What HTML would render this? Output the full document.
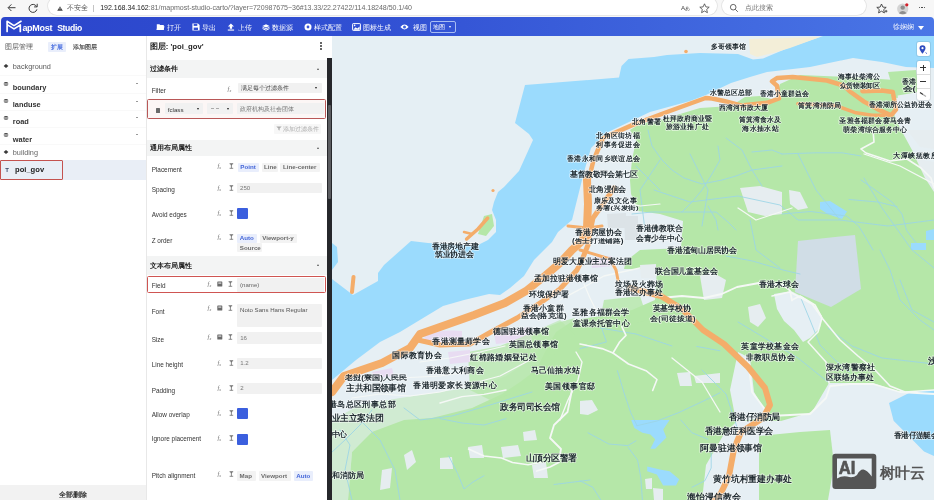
<!DOCTYPE html>
<html><head><meta charset="utf-8">
<style>
*{margin:0;padding:0;box-sizing:border-box}
html,body{width:934px;height:500px;overflow:hidden;background:#f7f7f7;font-family:"Liberation Sans",sans-serif;position:relative}
#root{position:absolute;left:0;top:0;width:934px;height:500px;overflow:hidden;will-change:transform}
.abs{position:absolute;white-space:nowrap}
.t{position:absolute;white-space:nowrap;line-height:10px}
.pill{position:absolute;background:#fff;border-radius:9px;box-shadow:0 0 0 0.8px #e2e2e2}
#hdr{position:absolute;left:1px;top:16.8px;width:933px;height:19.6px;background:linear-gradient(90deg,#2b45cb 0%,#3150d3 40%,#4a76e6 100%);border-radius:4px 4px 0 0}
.mi{position:absolute;top:22.5px;color:#fff;font-size:7px;line-height:10px}
#map{position:absolute;left:332px;top:36px;width:602px;height:464px;background:#e5eff4;overflow:hidden}
</style></head><body><div id="root">
<div class="abs" style="left:0px;top:0px;width:934.00px;height:17.00px;background:#f7f7f7;"></div>
<svg class="abs" style="left:6px;top:2px" width="12" height="12" viewBox="0 0 12 12"><path d="M9.5 5.7H2.4M5.4 2.4L2.1 5.7l3.3 3.3" stroke="#333" stroke-width="0.95" fill="none"/></svg>
<svg class="abs" style="left:27px;top:2px" width="12" height="12" viewBox="0 0 12 12"><path d="M9.6 4.6A4 4 0 1 0 9.9 7.4" stroke="#333" stroke-width="0.95" fill="none"/><path d="M10.2 1.8v3.1H7.1" stroke="#333" stroke-width="0.95" fill="none"/></svg>
<div class="pill" style="left:47.6px;top:-3px;width:669px;height:18.4px"></div>
<svg class="abs" style="left:57px;top:6px" width="6" height="5" viewBox="0 0 6 5"><path d="M3 0.2L5.8 4.8H0.2Z" fill="#444"/><rect x="2.7" y="1.6" width="0.6" height="1.8" fill="#fff"/></svg>
<div class="t" style="left:67.3px;top:3.00px;font-size:6.8px;color:#555;">不安全</div>
<div class="abs" style="left:93.4px;top:4.5px;width:0.80px;height:7.10px;background:#c4c4c4;"></div>
<div class="t" style="left:100.2px;top:3.30px;font-size:7.05px;color:#6a6a6a;letter-spacing:-0.03px"><span style="color:#222">192.168.34.162</span>:81/mapmost-studio-carto/?layer=720987675~36#13.33/22.27422/114.18248/50.1/40</div>
<div class="t" style="left:681px;top:3.00px;font-size:6.2px;color:#444;">A<span style="font-size:5px">あ</span></div>
<svg class="abs" style="left:699px;top:3px" width="11" height="11" viewBox="0 0 11 11"><path d="M5.5 0.8L6.9 3.9L10.2 4.2L7.7 6.4L8.4 9.7L5.5 8L2.6 9.7L3.3 6.4L0.8 4.2L4.1 3.9Z" stroke="#444" stroke-width="0.8" fill="none" stroke-linejoin="round"/></svg>
<div class="pill" style="left:722px;top:-3px;width:144px;height:18.4px"></div>
<svg class="abs" style="left:729px;top:3px" width="10" height="10" viewBox="0 0 10 10"><circle cx="4.2" cy="4.2" r="2.8" stroke="#555" stroke-width="0.9" fill="none"/><path d="M6.3 6.3L8.8 8.8" stroke="#555" stroke-width="0.9"/></svg>
<div class="t" style="left:744.6px;top:3.00px;font-size:6.8px;color:#777;">点此搜索</div>
<svg class="abs" style="left:876px;top:2.5px" width="12" height="12" viewBox="0 0 12 12"><path d="M5.5 1L6.9 4.1L10.2 4.4L7.7 6.6L8.4 9.9L5.5 8.2L2.6 9.9L3.3 6.6L0.8 4.4L4.1 4.1Z" stroke="#333" stroke-width="0.85" fill="none" stroke-linejoin="round"/><path d="M8.8 8.2h2.6M10.1 6.9v2.6" stroke="#333" stroke-width="0.8"/></svg>
<svg class="abs" style="left:896px;top:1.5px" width="14" height="14" viewBox="0 0 14 14"><circle cx="6.7" cy="7" r="5.6" fill="#d4d4d4"/><circle cx="6.7" cy="5.6" r="2.2" fill="#8e8e8e"/><path d="M2.8 11.2Q6.7 6.8 10.6 11.2Q6.7 13.5 2.8 11.2Z" fill="#8e8e8e"/><circle cx="10.8" cy="2.8" r="1.6" fill="#d21f2a"/></svg>
<div class="abs" style="left:918.5px;top:7px;width:1.30px;height:1.30px;background:#333;border-radius:1px"></div>
<div class="abs" style="left:921.3px;top:7px;width:1.30px;height:1.30px;background:#333;border-radius:1px"></div>
<div class="abs" style="left:924.1px;top:7px;width:1.30px;height:1.30px;background:#333;border-radius:1px"></div>
<div id="hdr"></div>
<svg class="abs" style="left:5px;top:19px" width="18" height="14" viewBox="5 19 18 14"><path d="M7.1,31.4 V21.3 L14,25.6 L21,21.3 M7.1,24.6 L14,28.9 L20.3,25 V31.4" stroke="#fff" stroke-width="1.7" fill="none" stroke-linejoin="round" stroke-linecap="round"/></svg>
<div class="t" style="left:22.4px;top:23.28px;font-size:9.0px;color:#fff;font-weight:bold;letter-spacing:-0.3px">apMost</div>
<div class="t" style="left:57.2px;top:23.42px;font-size:8.6px;color:#fff;font-weight:bold;letter-spacing:-0.35px">Studio</div>
<div class="t" style="left:167.3px;top:22.50px;font-size:6.9px;color:#fff;">打开</div>
<div class="t" style="left:202.3px;top:22.50px;font-size:6.9px;color:#fff;">导出</div>
<div class="t" style="left:237.6px;top:22.50px;font-size:6.9px;color:#fff;">上传</div>
<div class="t" style="left:272.4px;top:22.50px;font-size:6.9px;color:#fff;">数据源</div>
<div class="t" style="left:314px;top:22.50px;font-size:6.9px;color:#fff;">样式配置</div>
<div class="t" style="left:362.8px;top:22.50px;font-size:6.9px;color:#fff;">图标生成</div>
<div class="t" style="left:412.5px;top:22.50px;font-size:6.9px;color:#fff;">视图</div>
<svg class="abs" style="left:156px;top:23px" width="9" height="8" viewBox="0 0 9 8"><path d="M0.8 1.2h2.6l0.8 0.9h3.6v4.9H0.8z" fill="#fff"/><path d="M1.5 3.3h7l-1 3.7h-7z" fill="#fff"/></svg>
<svg class="abs" style="left:191.5px;top:23.4px" width="8" height="8" viewBox="0 0 8 8"><path d="M0.4 0.4h5.6l1.6 1.6v5.6H0.4z" fill="#fff"/><rect x="1.7" y="0.9" width="3.6" height="2" fill="#3552d4"/><rect x="1.7" y="4.6" width="4.3" height="2.4" fill="#3552d4"/></svg>
<svg class="abs" style="left:227px;top:23.2px" width="8" height="8" viewBox="0 0 8 8"><path d="M3.9 0.4L0.9 3.6h1.9v2.2h2.3V3.6h1.9z" fill="#fff"/><rect x="0.8" y="6.5" width="6.3" height="1.1" fill="#fff"/></svg>
<svg class="abs" style="left:261.5px;top:23.6px" width="8" height="7" viewBox="0 0 8 7"><path d="M4 0.3L7.6 1.9L4 3.5L0.4 1.9z" fill="#fff"/><path d="M0.5 3.2L4 4.8L7.5 3.2M0.5 4.6L4 6.2L7.5 4.6" stroke="#fff" stroke-width="0.9" fill="none"/></svg>
<svg class="abs" style="left:303.5px;top:23px" width="8" height="8" viewBox="0 0 8 8"><circle cx="4" cy="4" r="3.5" fill="#fff"/><circle cx="4" cy="4" r="1.4" fill="#3854d6"/></svg>
<svg class="abs" style="left:352px;top:23px" width="9" height="8" viewBox="0 0 9 8"><rect x="0.6" y="0.6" width="7.8" height="6.8" stroke="#fff" stroke-width="1" fill="none" rx="0.6"/><path d="M1.4 6.6L3.6 4.3L5.3 5.6L7.6 3.4V6.8H1.4z" fill="#fff"/><circle cx="2.6" cy="2.4" r="0.8" fill="#fff"/></svg>
<svg class="abs" style="left:400px;top:23.2px" width="9" height="8" viewBox="0 0 9 8"><path d="M0.4 4Q4.5 -0.8 8.6 4Q4.5 8.8 0.4 4z" fill="#fff"/><circle cx="4.5" cy="4" r="1.5" fill="#3f62dc"/></svg>
<div class="abs" style="left:430.2px;top:21.4px;width:25.8px;height:11.2px;border:0.9px solid #a8bdf2;border-radius:2px"></div>
<div class="t" style="left:433.4px;top:22.00px;font-size:6px;color:#fff;">地图</div>
<div class="abs" style="left:449.2px;top:26.2px;width:0;height:0;border-left:1.5px solid transparent;border-right:1.5px solid transparent;border-top:2px solid #fff"></div>
<div class="t" style="left:893px;top:22.40px;font-size:6.9px;color:#fff;opacity:0.92">徐娴娴</div>
<div class="abs" style="left:917.6px;top:26px;width:0;height:0;border-left:3px solid transparent;border-right:3px solid transparent;border-top:4px solid #fff"></div>
<div class="abs" style="left:0px;top:36px;width:146.00px;height:464.00px;background:#fff;"></div>
<div class="abs" style="left:146px;top:36px;width:0.80px;height:464.00px;background:#e8e8e8;"></div>
<div class="t" style="left:4.8px;top:42.20px;font-size:7.0px;color:#555;">图层管理</div>
<div class="abs" style="left:48px;top:42.2px;width:18.00px;height:10.00px;background:#e9eefb;border-radius:1px"></div>
<div class="t" style="left:51px;top:42.20px;font-size:6.1px;color:#4a6fe0;font-weight:bold;">扩展</div>
<div class="t" style="left:72.6px;top:42.20px;font-size:6.1px;color:#3a3a3a;-webkit-text-stroke:0.15px #3a3a3a">添加图层</div>
<div class="abs" style="left:0px;top:75px;width:145.50px;height:0.70px;background:#f9f9f9;"></div>
<div class="abs" style="left:0px;top:92.6px;width:145.50px;height:0.70px;background:#f9f9f9;"></div>
<div class="abs" style="left:0px;top:110px;width:145.50px;height:0.70px;background:#f9f9f9;"></div>
<div class="abs" style="left:0px;top:126.5px;width:145.50px;height:0.70px;background:#f9f9f9;"></div>
<div class="abs" style="left:0px;top:143.5px;width:145.50px;height:0.70px;background:#f9f9f9;"></div>
<svg class="abs" style="left:2.5999999999999996px;top:63px" width="6" height="6" viewBox="0 0 6 6"><path d="M0.6 3L3 1L5.4 3L3 5Z" fill="#3a3a3a"/></svg>
<div class="t" style="left:12.8px;top:62.07px;font-size:7.3px;color:#5a5a5a;">background</div>
<svg class="abs" style="left:2.5999999999999996px;top:80.6px" width="6" height="6" viewBox="0 0 6 6"><path d="M0.6 2.6Q0.6 1 3 1Q5.4 1 5.4 2.6Z" fill="#3a3a3a"/><path d="M0.6 3.2H5.4Q5.4 5 3 5Q0.6 5 0.6 3.2Z" fill="#777"/></svg>
<div class="t" style="left:12.8px;top:82.74px;font-size:7.4px;color:#333;font-weight:bold;">boundary</div>
<div class="abs" style="left:135.5px;top:83.19999999999999px;width:2.00px;height:0.90px;background:#999;"></div>
<svg class="abs" style="left:2.5999999999999996px;top:97.9px" width="6" height="6" viewBox="0 0 6 6"><path d="M0.6 2.6Q0.6 1 3 1Q5.4 1 5.4 2.6Z" fill="#3a3a3a"/><path d="M0.6 3.2H5.4Q5.4 5 3 5Q0.6 5 0.6 3.2Z" fill="#777"/></svg>
<div class="t" style="left:12.8px;top:100.04px;font-size:7.4px;color:#333;font-weight:bold;">landuse</div>
<div class="abs" style="left:135.5px;top:100.5px;width:2.00px;height:0.90px;background:#999;"></div>
<svg class="abs" style="left:2.5999999999999996px;top:114.8px" width="6" height="6" viewBox="0 0 6 6"><path d="M0.6 2.6Q0.6 1 3 1Q5.4 1 5.4 2.6Z" fill="#3a3a3a"/><path d="M0.6 3.2H5.4Q5.4 5 3 5Q0.6 5 0.6 3.2Z" fill="#777"/></svg>
<div class="t" style="left:12.8px;top:117.44px;font-size:7.4px;color:#333;font-weight:bold;">road</div>
<div class="abs" style="left:135.5px;top:117.39999999999999px;width:2.00px;height:0.90px;background:#999;"></div>
<svg class="abs" style="left:2.5999999999999996px;top:131.7px" width="6" height="6" viewBox="0 0 6 6"><path d="M0.6 2.6Q0.6 1 3 1Q5.4 1 5.4 2.6Z" fill="#3a3a3a"/><path d="M0.6 3.2H5.4Q5.4 5 3 5Q0.6 5 0.6 3.2Z" fill="#777"/></svg>
<div class="t" style="left:12.8px;top:134.64px;font-size:7.4px;color:#333;font-weight:bold;">water</div>
<div class="abs" style="left:135.5px;top:134.29999999999998px;width:2.00px;height:0.90px;background:#999;"></div>
<svg class="abs" style="left:2.5999999999999996px;top:149.4px" width="6" height="6" viewBox="0 0 6 6"><path d="M0.6 3L3 1L5.4 3L3 5Z" fill="#3a3a3a"/></svg>
<div class="t" style="left:12.8px;top:147.67px;font-size:7.3px;color:#666;">building</div>
<div class="abs" style="left:0px;top:160.2px;width:145.50px;height:19.50px;background:#e9eef6;"></div>
<div class="abs" style="left:0;top:160.2px;width:63px;height:19.5px;border:1.7px solid #c4524f;border-radius:1px"></div>
<div class="t" style="left:5.2px;top:165.32px;font-size:6px;color:#3a4a6a;font-weight:bold;">T</div>
<div class="t" style="left:15px;top:164.57px;font-size:7.6px;color:#222;font-weight:bold;">poi_gov</div>
<div class="abs" style="left:0px;top:485px;width:145.50px;height:15.00px;background:#f2f2f2;"></div>
<div class="t" style="left:59px;top:489.90px;font-size:7px;color:#333;font-weight:bold;">全部删除</div>
<div class="abs" style="left:146.8px;top:36px;width:185.20px;height:464.00px;background:#fff;"></div>
<div class="t" style="left:149.8px;top:41.70px;font-size:7.7px;color:#222;font-weight:bold;">图层: 'poi_gov'</div>
<div class="abs" style="left:320px;top:42.4px;width:1.60px;height:1.60px;background:#333;border-radius:1px"></div>
<div class="abs" style="left:320px;top:45.4px;width:1.60px;height:1.60px;background:#333;border-radius:1px"></div>
<div class="abs" style="left:320px;top:48.4px;width:1.60px;height:1.60px;background:#333;border-radius:1px"></div>
<div class="abs" style="left:146.8px;top:60px;width:180.20px;height:17.80px;background:#f3f4f4;"></div>
<div class="t" style="left:149.8px;top:63.90px;font-size:6.8px;color:#222;font-weight:bold;">过滤条件</div>
<div class="abs" style="left:316.6px;top:67.6px;width:0;height:0;border-left:1.8px solid transparent;border-right:1.8px solid transparent;border-bottom:2.2px solid #555"></div>
<div class="abs" style="left:146.8px;top:140.2px;width:180.20px;height:15.40px;background:#f3f4f4;"></div>
<div class="t" style="left:149.8px;top:142.90px;font-size:6.8px;color:#222;font-weight:bold;">通用布局属性</div>
<div class="abs" style="left:316.6px;top:146.6px;width:0;height:0;border-left:1.8px solid transparent;border-right:1.8px solid transparent;border-bottom:2.2px solid #555"></div>
<div class="abs" style="left:146.8px;top:256px;width:180.20px;height:19.20px;background:#f3f4f4;"></div>
<div class="t" style="left:149.8px;top:260.60px;font-size:6.8px;color:#222;font-weight:bold;">文本布局属性</div>
<div class="abs" style="left:316.6px;top:264.3px;width:0;height:0;border-left:1.8px solid transparent;border-right:1.8px solid transparent;border-bottom:2.2px solid #555"></div>
<div class="t" style="left:151.7px;top:85.58px;font-size:6.4px;color:#333;">Filter</div>
<div class="t" style="left:227.6px;top:83.5px;font-size:6.6px;color:#777;font-style:italic;font-family:'Liberation Serif',serif">f<span style="font-size:4px;vertical-align:-0.5px">x</span></div>
<div class="abs" style="left:237.8px;top:83.2px;width:84.60px;height:10.20px;background:#f1f1f1;border-radius:1px"></div>
<div class="t" style="left:240.8px;top:83.30px;font-size:5.9px;color:#444;">满足每个过滤条件</div>
<div class="abs" style="left:315.4px;top:87.3px;width:0;height:0;border-left:1.6px solid transparent;border-right:1.6px solid transparent;border-top:2.2px solid #222"></div>
<div class="abs" style="left:146.7px;top:99.1px;width:179.5px;height:19.5px;border:1.8px solid #b95757;background:#fcf6f5;border-radius:1.5px"></div>
<div class="abs" style="left:156.2px;top:107.8px;width:3.40px;height:4.80px;background:#6a6a6a;border-radius:0.5px"></div>
<div class="abs" style="left:164.7px;top:103.4px;width:38.30px;height:11.00px;background:#f1f1f1;border-radius:1px"></div>
<div class="t" style="left:167.7px;top:104.85px;font-size:6.2px;color:#333;">fclass</div>
<div class="abs" style="left:197.20000000000002px;top:107.7px;width:0;height:0;border-left:1.6px solid transparent;border-right:1.6px solid transparent;border-top:2.2px solid #222"></div>
<div class="abs" style="left:207.2px;top:103.4px;width:25.80px;height:11.00px;background:#f1f1f1;border-radius:1px"></div>
<div class="abs" style="left:211px;top:108px;width:3.00px;height:1.40px;background:#aaa;"></div>
<div class="abs" style="left:215.6px;top:108px;width:3.00px;height:1.40px;background:#aaa;"></div>
<div class="abs" style="left:227.20000000000002px;top:107.7px;width:0;height:0;border-left:1.6px solid transparent;border-right:1.6px solid transparent;border-top:2.2px solid #222"></div>
<div class="abs" style="left:237.2px;top:103.4px;width:86.40px;height:11.00px;background:#f1f1f1;border-radius:1px"></div>
<div class="t" style="left:240.2px;top:103.90px;font-size:5.9px;color:#777;">政府机构及社会团体</div>
<div class="abs" style="left:274px;top:123.5px;width:47.00px;height:10.50px;background:#f7f7f7;border-radius:1px"></div>
<svg class="abs" style="left:276.3px;top:126.3px" width="6" height="5" viewBox="0 0 6 5"><path d="M0.3 0.5H5.7L3.6 2.6V4.6L2.4 4V2.6Z" fill="#aaa"/></svg>
<div class="t" style="left:283px;top:123.80px;font-size:5.9px;color:#aaa;">添加过滤条件</div>
<div class="t" style="left:151.7px;top:164.58px;font-size:6.4px;color:#333;">Placement</div>
<div class="t" style="left:217.4px;top:160.8px;font-size:6.6px;color:#777;font-style:italic;font-family:'Liberation Serif',serif">f<span style="font-size:4px;vertical-align:-0.5px">x</span></div>
<svg class="abs" style="left:228.60000000000002px;top:162.8px" width="5" height="6" viewBox="0 0 5 6"><path d="M0.6 0.7H4.2M0.6 5.3H4.2M2.4 0.7V5.3M1.4 0.7L2.4 2.2M3.4 0.7L2.4 2.2" stroke="#666" stroke-width="0.75" fill="none"/></svg>
<div class="abs" style="left:237.7px;top:162.6px;width:21.00px;height:9.10px;background:#e9eefc;border-radius:1px"></div>
<div class="t" style="left:240.29999999999998px;top:162.20px;font-size:6.2px;color:#4466d8;font-weight:bold;">Point</div>
<div class="abs" style="left:261.5px;top:162.6px;width:16.10px;height:9.10px;background:#f3f3f3;border-radius:1px"></div>
<div class="t" style="left:264.1px;top:162.20px;font-size:6.2px;color:#6a6a6a;font-weight:bold;">Line</div>
<div class="abs" style="left:280.4px;top:162.6px;width:39.20px;height:9.10px;background:#f3f3f3;border-radius:1px"></div>
<div class="t" style="left:283.0px;top:162.20px;font-size:6.2px;color:#6a6a6a;font-weight:bold;">Line-center</div>
<div class="t" style="left:151.7px;top:184.98px;font-size:6.4px;color:#333;">Spacing</div>
<div class="t" style="left:217.4px;top:182.5px;font-size:6.6px;color:#777;font-style:italic;font-family:'Liberation Serif',serif">f<span style="font-size:4px;vertical-align:-0.5px">x</span></div>
<svg class="abs" style="left:228.60000000000002px;top:184.5px" width="5" height="6" viewBox="0 0 5 6"><path d="M0.6 0.7H4.2M0.6 5.3H4.2M2.4 0.7V5.3M1.4 0.7L2.4 2.2M3.4 0.7L2.4 2.2" stroke="#666" stroke-width="0.75" fill="none"/></svg>
<div class="abs" style="left:237px;top:183px;width:84.70px;height:10.40px;background:#f1f1f1;border-radius:1px"></div>
<div class="t" style="left:240px;top:183.20px;font-size:6.1px;color:#777;">250</div>
<div class="t" style="left:151.7px;top:210.48px;font-size:6.4px;color:#333;">Avoid edges</div>
<div class="t" style="left:217.4px;top:207.5px;font-size:6.6px;color:#777;font-style:italic;font-family:'Liberation Serif',serif">f<span style="font-size:4px;vertical-align:-0.5px">x</span></div>
<svg class="abs" style="left:228.60000000000002px;top:209.5px" width="5" height="6" viewBox="0 0 5 6"><path d="M0.6 0.7H4.2M0.6 5.3H4.2M2.4 0.7V5.3M1.4 0.7L2.4 2.2M3.4 0.7L2.4 2.2" stroke="#666" stroke-width="0.75" fill="none"/></svg>
<div class="abs" style="left:236.9px;top:208px;width:11.50px;height:11.00px;background:#3b5fde;border-radius:1px"></div>
<div class="t" style="left:151.7px;top:235.78px;font-size:6.4px;color:#333;">Z order</div>
<div class="t" style="left:217.4px;top:231.5px;font-size:6.6px;color:#777;font-style:italic;font-family:'Liberation Serif',serif">f<span style="font-size:4px;vertical-align:-0.5px">x</span></div>
<svg class="abs" style="left:228.60000000000002px;top:233.5px" width="5" height="6" viewBox="0 0 5 6"><path d="M0.6 0.7H4.2M0.6 5.3H4.2M2.4 0.7V5.3M1.4 0.7L2.4 2.2M3.4 0.7L2.4 2.2" stroke="#666" stroke-width="0.75" fill="none"/></svg>
<div class="abs" style="left:237.2px;top:233.6px;width:20.00px;height:9.60px;background:#e9eefc;border-radius:1px"></div>
<div class="t" style="left:239.79999999999998px;top:233.45px;font-size:6.2px;color:#4466d8;font-weight:bold;">Auto</div>
<div class="abs" style="left:259.6px;top:233.6px;width:37.60px;height:9.60px;background:#f3f3f3;border-radius:1px"></div>
<div class="t" style="left:262.20000000000005px;top:233.45px;font-size:6.2px;color:#6a6a6a;font-weight:bold;">Viewport-y</div>
<div class="abs" style="left:237.2px;top:243.2px;width:24.80px;height:8.80px;background:#f3f3f3;border-radius:1px"></div>
<div class="t" style="left:239.79999999999998px;top:242.65px;font-size:6.2px;color:#6a6a6a;font-weight:bold;">Source</div>
<div class="abs" style="left:146.7px;top:276.4px;width:179px;height:16.8px;border:1.8px solid #cf5552;border-radius:1.5px"></div>
<div class="t" style="left:151.7px;top:280.98px;font-size:6.4px;color:#333;">Field</div>
<div class="t" style="left:207.6px;top:278.6px;font-size:6.6px;color:#777;font-style:italic;font-family:'Liberation Serif',serif">f<span style="font-size:4px;vertical-align:-0.5px">x</span></div>
<svg class="abs" style="left:217.2px;top:280.6px" width="6" height="6" viewBox="0 0 6 6"><rect x="0.3" y="0.5" width="5" height="5" rx="0.6" fill="#6a6a6a"/><rect x="1.3" y="1.5" width="3" height="1.2" fill="#ddd"/></svg>
<svg class="abs" style="left:228.4px;top:280.6px" width="5" height="6" viewBox="0 0 5 6"><path d="M0.6 0.7H4.2M0.6 5.3H4.2M2.4 0.7V5.3M1.4 0.7L2.4 2.2M3.4 0.7L2.4 2.2" stroke="#666" stroke-width="0.75" fill="none"/></svg>
<div class="abs" style="left:237px;top:278.2px;width:87.40px;height:13.40px;background:#f1f1f1;border-radius:1px"></div>
<div class="t" style="left:240px;top:279.90px;font-size:6.1px;color:#666;">(name)</div>
<div class="t" style="left:151.7px;top:306.88px;font-size:6.4px;color:#333;">Font</div>
<div class="t" style="left:207.6px;top:302.6px;font-size:6.6px;color:#777;font-style:italic;font-family:'Liberation Serif',serif">f<span style="font-size:4px;vertical-align:-0.5px">x</span></div>
<svg class="abs" style="left:217.2px;top:304.6px" width="6" height="6" viewBox="0 0 6 6"><rect x="0.3" y="0.5" width="5" height="5" rx="0.6" fill="#6a6a6a"/><rect x="1.3" y="1.5" width="3" height="1.2" fill="#ddd"/></svg>
<svg class="abs" style="left:228.4px;top:304.6px" width="5" height="6" viewBox="0 0 5 6"><path d="M0.6 0.7H4.2M0.6 5.3H4.2M2.4 0.7V5.3M1.4 0.7L2.4 2.2M3.4 0.7L2.4 2.2" stroke="#666" stroke-width="0.75" fill="none"/></svg>
<div class="abs" style="left:237.2px;top:303.6px;width:84.80px;height:23.20px;background:#f1f1f1;border-radius:1px"></div>
<div class="t" style="left:240px;top:304.70px;font-size:6.1px;color:#555;">Noto Sans Hans Regular</div>
<div class="t" style="left:151.7px;top:334.98px;font-size:6.4px;color:#333;">Size</div>
<div class="t" style="left:207.6px;top:332.2px;font-size:6.6px;color:#777;font-style:italic;font-family:'Liberation Serif',serif">f<span style="font-size:4px;vertical-align:-0.5px">x</span></div>
<svg class="abs" style="left:217.2px;top:334.2px" width="6" height="6" viewBox="0 0 6 6"><rect x="0.3" y="0.5" width="5" height="5" rx="0.6" fill="#6a6a6a"/><rect x="1.3" y="1.5" width="3" height="1.2" fill="#ddd"/></svg>
<svg class="abs" style="left:228.4px;top:334.2px" width="5" height="6" viewBox="0 0 5 6"><path d="M0.6 0.7H4.2M0.6 5.3H4.2M2.4 0.7V5.3M1.4 0.7L2.4 2.2M3.4 0.7L2.4 2.2" stroke="#666" stroke-width="0.75" fill="none"/></svg>
<div class="abs" style="left:237.2px;top:332.4px;width:84.80px;height:11.60px;background:#f1f1f1;border-radius:1px"></div>
<div class="t" style="left:240.2px;top:333.20px;font-size:6.1px;color:#777;">16</div>
<div class="t" style="left:151.7px;top:359.98px;font-size:6.4px;color:#333;">Line height</div>
<div class="t" style="left:217.4px;top:357.6px;font-size:6.6px;color:#777;font-style:italic;font-family:'Liberation Serif',serif">f<span style="font-size:4px;vertical-align:-0.5px">x</span></div>
<svg class="abs" style="left:228.60000000000002px;top:359.6px" width="5" height="6" viewBox="0 0 5 6"><path d="M0.6 0.7H4.2M0.6 5.3H4.2M2.4 0.7V5.3M1.4 0.7L2.4 2.2M3.4 0.7L2.4 2.2" stroke="#666" stroke-width="0.75" fill="none"/></svg>
<div class="abs" style="left:237.2px;top:357.8px;width:84.80px;height:10.90px;background:#f1f1f1;border-radius:1px"></div>
<div class="t" style="left:240.2px;top:358.25px;font-size:6.1px;color:#777;">1.2</div>
<div class="t" style="left:151.7px;top:385.58px;font-size:6.4px;color:#333;">Padding</div>
<div class="t" style="left:217.4px;top:382.9px;font-size:6.6px;color:#777;font-style:italic;font-family:'Liberation Serif',serif">f<span style="font-size:4px;vertical-align:-0.5px">x</span></div>
<svg class="abs" style="left:228.60000000000002px;top:384.9px" width="5" height="6" viewBox="0 0 5 6"><path d="M0.6 0.7H4.2M0.6 5.3H4.2M2.4 0.7V5.3M1.4 0.7L2.4 2.2M3.4 0.7L2.4 2.2" stroke="#666" stroke-width="0.75" fill="none"/></svg>
<div class="abs" style="left:237.2px;top:383px;width:84.80px;height:10.80px;background:#f1f1f1;border-radius:1px"></div>
<div class="t" style="left:240.2px;top:383.40px;font-size:6.1px;color:#777;">2</div>
<div class="t" style="left:151.7px;top:410.38px;font-size:6.4px;color:#333;">Allow overlap</div>
<div class="t" style="left:217.4px;top:408px;font-size:6.6px;color:#777;font-style:italic;font-family:'Liberation Serif',serif">f<span style="font-size:4px;vertical-align:-0.5px">x</span></div>
<svg class="abs" style="left:228.60000000000002px;top:410px" width="5" height="6" viewBox="0 0 5 6"><path d="M0.6 0.7H4.2M0.6 5.3H4.2M2.4 0.7V5.3M1.4 0.7L2.4 2.2M3.4 0.7L2.4 2.2" stroke="#666" stroke-width="0.75" fill="none"/></svg>
<div class="abs" style="left:236.9px;top:408.2px;width:11.50px;height:11.00px;background:#3b5fde;border-radius:1px"></div>
<div class="t" style="left:151.7px;top:434.18px;font-size:6.4px;color:#333;">Ignore placement</div>
<div class="t" style="left:217.4px;top:433px;font-size:6.6px;color:#777;font-style:italic;font-family:'Liberation Serif',serif">f<span style="font-size:4px;vertical-align:-0.5px">x</span></div>
<svg class="abs" style="left:228.60000000000002px;top:435px" width="5" height="6" viewBox="0 0 5 6"><path d="M0.6 0.7H4.2M0.6 5.3H4.2M2.4 0.7V5.3M1.4 0.7L2.4 2.2M3.4 0.7L2.4 2.2" stroke="#666" stroke-width="0.75" fill="none"/></svg>
<div class="abs" style="left:236.9px;top:433.6px;width:11.50px;height:11.00px;background:#3b5fde;border-radius:1px"></div>
<div class="t" style="left:151.7px;top:471.28px;font-size:6.4px;color:#333;">Pitch alignment</div>
<div class="t" style="left:217.4px;top:469px;font-size:6.6px;color:#777;font-style:italic;font-family:'Liberation Serif',serif">f<span style="font-size:4px;vertical-align:-0.5px">x</span></div>
<svg class="abs" style="left:228.60000000000002px;top:471px" width="5" height="6" viewBox="0 0 5 6"><path d="M0.6 0.7H4.2M0.6 5.3H4.2M2.4 0.7V5.3M1.4 0.7L2.4 2.2M3.4 0.7L2.4 2.2" stroke="#666" stroke-width="0.75" fill="none"/></svg>
<div class="abs" style="left:237px;top:470.9px;width:18.60px;height:9.90px;background:#f3f3f3;border-radius:1px"></div>
<div class="t" style="left:239.6px;top:470.90px;font-size:6.2px;color:#6a6a6a;font-weight:bold;">Map</div>
<div class="abs" style="left:258.5px;top:470.9px;width:32.00px;height:9.90px;background:#f3f3f3;border-radius:1px"></div>
<div class="t" style="left:261.1px;top:470.90px;font-size:6.2px;color:#6a6a6a;font-weight:bold;">Viewport</div>
<div class="abs" style="left:293.7px;top:470.9px;width:19.50px;height:9.90px;background:#e9eefc;border-radius:1px"></div>
<div class="t" style="left:296.3px;top:470.90px;font-size:6.2px;color:#4466d8;font-weight:bold;">Auto</div>
<div class="abs" style="left:327px;top:57.6px;width:5.00px;height:442.40px;background:#26272b;"></div>
<div class="abs" style="left:327.7px;top:104.6px;width:3.10px;height:94.70px;background:#5b5c60;border-radius:1px"></div>
<!-- map -->
<div id="map" style="will-change:transform"><svg width="602" height="464" viewBox="332 36 602 464" style="position:absolute;left:0;top:0">
<rect x="332" y="36" width="602" height="464" fill="#e5eff4"/>
<path fill="#e6eff4" d="M934,68 906,67 882,62 853,58 810,67 767,72 750,77 731,83 706,95 690,101 650,112 606,133 591,148 584,172 578,196 572,220 558,232 552,242 534,260 524,276 510,288 500,295 489,294 464,300 443,306 400,332 380,342 356,360 332,380 332,500 934,500Z"/>
<path fill="#9bdbfd" d="M332,279 353,295 378,281 378,273 384,265 411,241 428,243 476,246 488,240 496,232 496,220 492,210 494,202 498,192 504,187 519,171 533,140 529,134 515,123 525,85 619,77.5 621.5,66 628.5,59 654,57 667,55 700,53 738,54 753,59.5 763,58.5 788,48 823,36 934,36 934,68 906,67 882,62 853,58 810,67 767,72 750,77 731,83 706,95 690,101 650,112 606,133 591,148 584,172 578,196 572,220 558,232 552,242 534,260 524,276 510,288 500,295 489,294 464,300 443,306 400,332 380,342 356,360 332,380Z"/>
<path fill="#9bdbfd" d="M332,243 L337,247 338,262 332,270Z"/>
<path fill="#f3eed8" d="M749,39 L820,37 790,48 775,52.5 757,57 750,54Z"/>
<path fill="#b5e7a8" d="M484,216 L492,214 494,226 486,236 478,234Z"/>
<circle cx="493" cy="190.5" r="1.6" fill="#f4ad6a"/>
<circle cx="686" cy="51.5" r="1.8" fill="#f4ad6a"/>
<path fill="#b5e7a8" d="M348,500 352,452 372,432 404,420 432,418 472,408 502,394 520,382 536,370 546,350 556,332 574,320 607,315 632,310 655,300 657,269 624,269 626,261 640,250 681,248 683,221 660,214 638,211 631,194 630,180 632,160 636,140 630,130 640,124 660,120 700,108 731,106 745,97 760,96 775,100 780,84 800,75 850,77 895,80 900,110 934,115 934,500Z"/>
<path fill="#dce3e7" d="M607,214 L626,213 626,228 608,228Z"/>
<path fill="#dce3e7" d="M624,216 L638,216 638,240 625,240Z"/>
<path fill="#e6eff4" d="M895,98 L934,95 934,185 925,175 912,150 900,128 893,112Z"/>
<path fill="#b5e7a8" d="M888,72 L916,70 918,92 895,96Z"/>
<path fill="#b5e7a8" opacity="0.45" d="M332,420 L360,405 400,398 440,392 480,386 506,376 527,362 543,346 560,330 580,318 560,345 540,372 510,394 470,410 430,420 400,422 372,434 352,452 348,500 332,500Z"/>
<path fill="#e8dcf2" d="M424,336 Q440,329 462,331 L462,344 Q440,346 426,343Z"/>
<path fill="#b5e7a8" opacity="0.75" d="M468,352 L500,346 530,334 560,322 575,318 560,345 545,370 520,390 490,400 470,390Z"/>
<path fill="#e8dcf2" d="M448,352 L470,350 470,362 450,364Z"/>
<path fill="#e8dcf2" d="M494,333 L530,327 532,340 496,344Z"/>
<path fill="#e8dcf2" d="M372,372 L392,368 394,376 374,378Z"/>
<path fill="#e8dcf2" d="M590,258 L612,256 612,266 592,268Z"/>
<path fill="#b5e7a8" d="M604,300 L640,296 648,320 620,326 600,320Z" opacity="0.8"/>
<path fill="#b5e7a8" d="M515,340 L560,320 575,335 545,360 505,362Z" opacity="0.6"/>
<path fill="#e6eff4" d="M774,294 L791,291 803,297 815,306 822,316 820,328 810,338 803,342 794,330 784,321 777,309Z"/>
<path fill="#e6eff4" d="M829,383 L873,383 900,392 934,395 934,500 702,500 706,465 724,434 737,421 781,421 812,412Z"/>
<path fill="#b5e7a8" d="M759,436 L800,432 830,430 834,465 828,500 759,500Z"/>
<path fill="#e6eff4" d="M738,352 L750,358 754,392 770,418 736,421 730,390Z"/>
<path fill="#d0dde6" d="M798,241 L855,235 861,289 831,307 795,292Z"/>
<path fill="#9bdbfd" d="M889,403 L911,392 934,390 934,456 924,451.6 906.8,434 893.6,420.8Z"/>
<path fill="#e6edf0" d="M740,188 760,186 782,192 782,214 765,216 748,212Z"/>
<path fill="#e6edf0" d="M789,190 800,192 808,208 798,210 790,204Z"/>
<path fill="#e6edf0" d="M907,130 934,130 934,149 920,147Z"/>
<path fill="#e6edf0" d="M916,159 934,162 934,192 925,178Z"/>
<path fill="#e6edf0" d="M700,276 712,272 726,280 722,298 704,300Z"/>
<path fill="#e6edf0" d="M748,307 760,304 766,318 758,327 750,322Z"/>
<path fill="#e6edf0" d="M677,373 690,372 692,386 680,386Z"/>
<path fill="#e6edf0" d="M694,376 720,373 720,383 696,383Z"/>
<path fill="#e6edf0" d="M580,401 592,400 598,410 588,415 580,414Z"/>
<path fill="#e6edf0" d="M645,479 652,478 652,489 646,489Z"/>
<path fill="#e6edf0" d="M653,488 663,489 663,500 654,500Z"/>
<path fill="#e6edf0" d="M468,447 482,445 484,458 470,458Z"/>
<path fill="#e6edf0" d="M501,447 518,445 521,456 503,458Z"/>
<path fill="#e6edf0" d="M532,465 546,462 548,478 534,478Z"/>
<path fill="#e6edf0" d="M440,458 452,457 453,469 440,469Z"/>
<path fill="#e6edf0" d="M523,432 535,430 537,440 524,441Z"/>
<path fill="#e6edf0" d="M404,455 412,450 416,462 407,470Z"/>
<path fill="#e6edf0" d="M382,470 392,468 390,488 380,490Z"/>
<path fill="#e6edf0" d="M640,265 656,264 656,278 641,278Z"/>
<path fill="#9bdbfd" d="M820,202 830,201 847,211.5 842,219 827.6,214 820,209Z"/>
<path fill="#9bdbfd" d="M911,243 926,243 926,250 911,250Z"/>
<path fill="#9bdbfd" d="M926,231 934,229 934,240 926,240Z"/>
<path fill="#9bdbfd" d="M631.2,420 634.4,428 642.4,432.8 650.4,434.4 655.2,439.2 650.4,448.8 655.2,448.8 666.4,437.6 663.2,429.6 669.6,420Z"/>
<path fill="#9bdbfd" d="M647.2,466.4 660,469.6 669.6,471.2 679.2,479.2 676,485.6 663.2,485.6 656.8,474.4 647.2,471.2Z"/>
<g fill="none" stroke="#9bd5e6" stroke-width="1" stroke-opacity="0.85" stroke-linejoin="round" stroke-linecap="round">
<path d="M648,130 652,146 662,160 672,170 684,178 702,184 722,180 736,176 752,170 782,166"/>
<path d="M718,146 720,160 712,174 702,190 692,202 682,212 652,212 632,214"/>
<path d="M726,138 742,150 752,170 762,186"/>
<path d="M752,152 772,150 782,154"/>
<path d="M682,212 716,212 728,222 736,230"/>
<path d="M708,206 716,220 718,230"/>
<path d="M782,154 815.6,152.8 842,152.8 861,156"/>
<path d="M861,180 878,192 892,202 902,214 906.7,230.7 916,242.7"/>
<path d="M782,214 810.8,211.5 830,214 846.7,216 858.7,226 866,238 873,250"/>
<path d="M849,199.5 878,202 897,206.7"/>
<path d="M726,256 752.5,261 783,270 800,274"/>
<path d="M602,329 606.4,342 580,348.6"/>
<path d="M617.4,370.7 624,392.7 630.7,412.5 637,425.7"/>
<path d="M637,425.7 657,421 679,412.5 707.7,399 720,392.7"/>
<path d="M696.7,346.4 720,350.8"/>
<path d="M588,432.8 608.8,444 628,445.6 636,440.8"/>
<path d="M628,447.2 637.6,460 640.8,477.6 642.4,500"/>
<path d="M680.8,420 692,432.8 708,439.2"/>
<path d="M711.2,452 711.2,468 704.8,480.8 692,487.2"/>
<path d="M580,480.8 592.8,487.2 600.8,500"/>
<path d="M440,418.6 462,423 484,425 506,418.6"/>
<path d="M448.8,456 457.6,473.5 464,489 473,482 484,475.7"/>
<path d="M554,484.5 590,480"/>
<path d="M340,430 350,445 345,470 352,500"/>
<path d="M360,420 380,440 395,470 400,500"/>
<path d="M800,296 810,320 820,345 835,360 850,372"/>
<path d="M880,250 890,270 900,300 920,320 934,330"/>
<path d="M660,160 640,190 645,230"/>
<path d="M404,408 420,420 452,416 490,405 532,392"/>
<path d="M332,452 345,440 360,425 372,410"/>
<path d="M654,190 690,202 738,196 780,205 798,220 840,220 888,226 934,220"/>
<path d="M690,154 708,190 702,226"/>
<path d="M798,154 816,190 840,220"/>
<path d="M864,178 882,208 912,250 934,268"/>
<path d="M738,322 768,340 798,358 828,382"/>
<path d="M828,328 852,346 882,358 934,364"/>
<path d="M600,328 636,334 672,346"/>
<path d="M702,370 726,394 738,430"/>
<path d="M900,280 912,310 934,322"/>
<path d="M636,166 660,190"/>
<path d="M750,220 756,250 780,268"/>
</g>
<g fill="none" stroke="#f5f8f6" stroke-linejoin="round" stroke-linecap="round">
<path stroke-width="1.6" d="M873,130 874,142 861,149 866,153 890,161 907,159 921,168 931,178 934,188"/>
<path stroke-width="1.8" d="M660,298 682,296 704,298 721.7,294 737,287 759,283 783,285 790,290.6 792,300.5"/>
<path stroke-width="1.6" d="M621.8,326.6 626,335.4 619.6,342 613,353 602,348.6 580,344"/>
<path stroke-width="1.6" d="M613,353 628.5,364 646,370.7 657,379.5 652.7,390.5"/>
<path stroke-width="1.8" d="M572,390 567.5,412 554,425 550,438 561,449 558.7,462.5 550,467 536.7,471"/>
<path stroke-width="1.6" d="M468.6,449 484,456 501.5,458 512.5,462.5 528,464.7 541,462.5"/>
<path stroke-width="1.4" d="M440,403 462,396.6 484,394.4 506,390"/>
<path stroke-width="1.6" d="M792,300 800,296 815,305 822,318 840,340 858,356 875,370 890,386 905,392 934,390"/>
<path stroke-width="1.4" d="M576,352 582,362 578,380 568,400 560,420"/>
<path stroke-width="1.3" d="M864,154 900,166 934,184"/>
<path stroke-width="1.8" d="M748,358 752,392 770,416 810,414 826,398 830,386 850,384 873,384 900,392 934,394"/>
<path stroke-width="1.5" d="M772,296 790,292 812,304 822,318 818,332 808,342 826,362 829,383"/>
<path stroke-width="1.3" d="M738,208 756,220 792,208"/>
<path stroke-width="1.3" d="M672,358 702,382 720,412"/>
<path stroke-width="1.4" d="M560,300 586,286 604,276 640,268"/>
<path stroke-width="1.2" d="M584,284 590,298 596,310"/>
<path stroke-width="1.2" d="M420,362 450,358 480,352 505,346"/>
<path stroke-width="1.2" d="M400,378 440,376 470,372"/>
<path stroke-width="1.2" d="M352,398 380,394 410,396 440,392 470,384 500,376 530,360"/>
<path stroke-width="1.2" d="M620,200 640,206 660,204"/>
</g>
<g fill="none" stroke="#f4ad6a" stroke-linecap="round" stroke-linejoin="round">
<path stroke-width="8" d="M332,392 344,376 382,363 410,348 420,334 440,327 474,315 505,303 526,291 546,275 560,263 572,250 582,241 587,228 588,204 587,180"/>
<path stroke-width="5" d="M418,340 440,345 470,344 491,332 517,318 543,301 560,289 577,270 582,260 588,245 590,232 593,218 603,204 614,188"/>
<path stroke-width="3" d="M568,226 588,228 602,226"/>
<path stroke-width="3" d="M580,250 610,259 616,270 618,280"/>
<path stroke-width="4.5" d="M587,180 587.6,184 593.6,160 603,138 632.8,124.9 667,112 705.6,98 712,98.5 724,101 741,105.4 767,102.8 779,98.5 777,85.7 772,81.4 777,78 792.7,77 827,80.5 844,85.7 849.6,91.2 864,101.6 878.4,109.6 891.2,115.2 896,109.6 892.8,92 881.6,90.4 862.4,91.2"/>
<path stroke-width="3.5" d="M797.9,103.7 835.5,105.4 856,112.8 872,115.2 888,115.2"/>
<path stroke-width="6" d="M630,288 661,296 682,309 703,330 724,344 748,367 765,388 770,405 763,418 741,432 734,449 729,476 721,493 714,500"/>
<path stroke-width="4" d="M353.5,277 352,292"/>
<path stroke-width="3.5" d="M466.6,239 478,229 487.7,218"/>
<path stroke-width="2.5" d="M472,234 464,232"/>
</g>
<g font-family="Liberation Sans, sans-serif" font-weight="600" fill="#222d33" stroke="#ffffff" stroke-opacity="0.6" stroke-width="1.6" paint-order="stroke" stroke-linejoin="round" style="opacity:0.999">
<text x="711.4" y="48.9" font-size="6.92" textLength="34.3" lengthAdjust="spacing">多哥领事馆</text>
<text x="709.6" y="95.2" font-size="7.14" textLength="42.5" lengthAdjust="spacing">水警总区总部</text>
<text x="760.4" y="96.0" font-size="6.94" textLength="48.3" lengthAdjust="spacing">香港小童群益会</text>
<text x="718.5" y="109.7" font-size="7.04" textLength="49.0" lengthAdjust="spacing">西湾河市政大厦</text>
<text x="798.1" y="108.1" font-size="7.24" textLength="43.2" lengthAdjust="spacing">筲箕湾消防局</text>
<text x="739.1" y="122.3" font-size="7.09" textLength="42.2" lengthAdjust="spacing">筲箕湾食水及</text>
<text x="742.4" y="130.9" font-size="7.33" textLength="36.4" lengthAdjust="spacing">海水抽水站</text>
<text x="632.2" y="124.4" font-size="7.21" textLength="28.6" lengthAdjust="spacing">北角警署</text>
<text x="662.6" y="120.7" font-size="7.10" textLength="49.4" lengthAdjust="spacing">杜拜政府商业暨</text>
<text x="665.8" y="128.7" font-size="7.21" textLength="43.0" lengthAdjust="spacing">旅游业推广处</text>
<text x="838.1" y="79.4" font-size="7.03" textLength="41.9" lengthAdjust="spacing">海事处柴湾公</text>
<text x="839.5" y="87.8" font-size="6.81" textLength="40.6" lengthAdjust="spacing">众货物装卸区</text>
<text x="869.0" y="107.1" font-size="7.00" textLength="62.7" lengthAdjust="spacing">香港湖所公益协进会</text>
<text x="901.8" y="83.5" font-size="7.11" textLength="13.9" lengthAdjust="spacing">香港</text>
<text x="902.5" y="91.3" font-size="6.67" textLength="13.1" lengthAdjust="spacingAndGlyphs">会(</text>
<text x="839.4" y="122.9" font-size="7.21" textLength="71.9" lengthAdjust="spacing">圣雅各福群会赛马会青</text>
<text x="843.4" y="132.3" font-size="7.09" textLength="63.5" lengthAdjust="spacing">萌柴湾综合服务中心</text>
<text x="596.4" y="138.3" font-size="7.24" textLength="43.2" lengthAdjust="spacing">北角区街坊福</text>
<text x="596.4" y="147.1" font-size="7.24" textLength="43.2" lengthAdjust="spacing">利事务促进会</text>
<text x="566.9" y="160.8" font-size="7.36" textLength="73.3" lengthAdjust="spacing">香港永和同乡联谊总会</text>
<text x="570.4" y="177.2" font-size="7.50" textLength="67.2" lengthAdjust="spacing">基督教敬拜会第七区</text>
<text x="589.0" y="191.8" font-size="7.50" textLength="37.2" lengthAdjust="spacing">北角浸信会</text>
<text x="593.8" y="202.7" font-size="7.17" textLength="42.7" lengthAdjust="spacing">康乐及文化事</text>
<text x="595.5" y="210.3" font-size="6.18" textLength="43.0" lengthAdjust="spacingAndGlyphs">务署(兴发街)</text>
<text x="575.4" y="235.3" font-size="7.76" textLength="46.2" lengthAdjust="spacing">香港房屋协会</text>
<text x="571.9" y="243.4" font-size="6.49" textLength="51.6" lengthAdjust="spacingAndGlyphs">(告士打道铺路)</text>
<text x="553.4" y="263.9" font-size="7.86" textLength="78.3" lengthAdjust="spacing">明爱大厦业主立案法团</text>
<text x="534.4" y="281.0" font-size="7.95" textLength="63.3" lengthAdjust="spacing">孟加拉驻港领事馆</text>
<text x="529.4" y="297.4" font-size="7.92" textLength="39.3" lengthAdjust="spacing">环境保护署</text>
<text x="522.9" y="311.1" font-size="8.21" textLength="40.7" lengthAdjust="spacing">香港小童群</text>
<text x="520.5" y="318.1" font-size="6.62" textLength="46.1" lengthAdjust="spacingAndGlyphs">益会(骆克道)</text>
<text x="572.4" y="315.4" font-size="8.09" textLength="56.3" lengthAdjust="spacing">圣雅各福群会学</text>
<text x="573.4" y="325.6" font-size="8.06" textLength="56.1" lengthAdjust="spacing">童课余托管中心</text>
<text x="615.4" y="286.6" font-size="8.02" textLength="47.8" lengthAdjust="spacing">坟场及火葬场</text>
<text x="615.4" y="295.2" font-size="8.02" textLength="47.8" lengthAdjust="spacing">香港区办事处</text>
<text x="635.9" y="230.9" font-size="7.84" textLength="46.8" lengthAdjust="spacing">香港佛教联合</text>
<text x="635.9" y="241.3" font-size="7.84" textLength="46.8" lengthAdjust="spacing">会青少年中心</text>
<text x="667.1" y="252.8" font-size="7.82" textLength="70.1" lengthAdjust="spacing">香港渣甸山居民协会</text>
<text x="654.9" y="274.4" font-size="7.88" textLength="62.8" lengthAdjust="spacing">联合国儿童基金会</text>
<text x="652.8" y="310.7" font-size="7.69" textLength="38.1" lengthAdjust="spacing">英基学校协</text>
<text x="650.3" y="321.4" font-size="6.50" textLength="45.2" lengthAdjust="spacingAndGlyphs">会(司徒拔道)</text>
<text x="759.2" y="286.8" font-size="8.00" textLength="39.7" lengthAdjust="spacing">香港木球会</text>
<text x="893.0" y="157.8" font-size="7.48" textLength="44.6" lengthAdjust="spacing">大潭峡惩教所</text>
<text x="431.8" y="248.5" font-size="7.86" textLength="46.9" lengthAdjust="spacing">香港房地产建</text>
<text x="434.9" y="256.9" font-size="7.81" textLength="38.8" lengthAdjust="spacing">筑业协进会</text>
<text x="492.7" y="334.3" font-size="8.15" textLength="56.7" lengthAdjust="spacing">德国驻港领事馆</text>
<text x="508.7" y="347.1" font-size="8.28" textLength="49.3" lengthAdjust="spacing">英国总领事馆</text>
<text x="432.3" y="344.1" font-size="8.24" textLength="57.3" lengthAdjust="spacing">香港测量师学会</text>
<text x="392.3" y="357.5" font-size="8.28" textLength="49.3" lengthAdjust="spacing">国际教育协会</text>
<text x="470.3" y="359.6" font-size="8.33" textLength="66.3" lengthAdjust="spacing">红棉路婚姻登记处</text>
<text x="425.7" y="373.1" font-size="8.32" textLength="57.9" lengthAdjust="spacing">香港意大利商会</text>
<text x="413.3" y="388.1" font-size="8.37" textLength="83.3" lengthAdjust="spacing">香港明爱家长资源中心</text>
<text x="344.8" y="380.3" font-size="7.00" textLength="62.7" lengthAdjust="spacingAndGlyphs">老挝(寮国)人民民</text>
<text x="346.3" y="390.8" font-size="8.53" textLength="59.4" lengthAdjust="spacing">主共和国领事馆</text>
<text x="320.5" y="406.7" font-size="8.37" textLength="75.0" lengthAdjust="spacing">香港岛总区刑事总部</text>
<text x="314.9" y="420.5" font-size="8.62" textLength="68.6" lengthAdjust="spacing">大厦业主立案法团</text>
<text x="331.9" y="437.4" font-size="7.50" textLength="14.7" lengthAdjust="spacing">中心</text>
<text x="332.4" y="477.8" font-size="8.08" textLength="32.0" lengthAdjust="spacing">和消防局</text>
<text x="500.1" y="409.6" font-size="8.62" textLength="60.0" lengthAdjust="spacing">政务司司长会馆</text>
<text x="530.5" y="372.7" font-size="8.28" textLength="49.3" lengthAdjust="spacing">马己仙抽水站</text>
<text x="544.9" y="388.8" font-size="8.45" textLength="50.4" lengthAdjust="spacing">美国领事官邸</text>
<text x="525.7" y="461.4" font-size="8.66" textLength="51.6" lengthAdjust="spacing">山顶分区警署</text>
<text x="741.2" y="349.4" font-size="8.31" textLength="57.8" lengthAdjust="spacing">英童学校基金会</text>
<text x="745.6" y="360.3" font-size="8.22" textLength="49.0" lengthAdjust="spacing">非教职员协会</text>
<text x="728.6" y="419.9" font-size="8.62" textLength="51.4" lengthAdjust="spacing">香港仔消防局</text>
<text x="704.8" y="434.2" font-size="8.59" textLength="68.4" lengthAdjust="spacing">香港急症科医学会</text>
<text x="700.3" y="451.3" font-size="8.91" textLength="62.0" lengthAdjust="spacing">阿曼驻港领事馆</text>
<text x="713.3" y="482.3" font-size="8.82" textLength="79.0" lengthAdjust="spacing">黄竹坑村重建办事处</text>
<text x="686.8" y="500.1" font-size="9.14" textLength="54.5" lengthAdjust="spacing">海怡浸信教会</text>
<text x="825.5" y="369.5" font-size="8.34" textLength="49.7" lengthAdjust="spacing">深水湾警察社</text>
<text x="825.6" y="380.1" font-size="8.10" textLength="48.3" lengthAdjust="spacing">区联络办事处</text>
<text x="893.9" y="437.8" font-size="7.50" textLength="44.7" lengthAdjust="spacing">香港仔游艇会</text>
<text x="927.8" y="364.3" font-size="9.38" textLength="9.0" lengthAdjust="spacing">浅</text>
</g>
</svg></div>

<div class="abs" style="left:916.5px;top:42px;width:13.5px;height:13.5px;background:#fff;border-radius:2px;box-shadow:0 0 0 1px rgba(0,0,0,0.08)"></div>
<svg class="abs" style="left:918px;top:43.5px" width="11" height="11" viewBox="0 0 11 11"><path d="M4.5 1.2a3 3 0 0 1 3 3c0 2-3 5.5-3 5.5s-3-3.5-3-5.5a3 3 0 0 1 3-3z" fill="#2f4bbf"/><circle cx="4.5" cy="4.2" r="1.1" fill="#fff"/><path d="M7.5 8.5l1.5 1.2" stroke="#2f4bbf" stroke-width="0.8"/></svg>
<div class="abs" style="left:916.5px;top:61px;width:13.5px;height:38.5px;background:#fff;border-radius:2px;box-shadow:0 0 0 1px rgba(0,0,0,0.08)"></div>
<div class="abs" style="left:916.5px;top:74px;width:13.5px;height:0.6px;background:#ddd"></div>
<div class="abs" style="left:916.5px;top:87.5px;width:13.5px;height:0.6px;background:#ddd"></div>
<div class="abs" style="left:920.2px;top:67px;width:6px;height:1.2px;background:#333"></div>
<div class="abs" style="left:922.6px;top:64.6px;width:1.2px;height:6px;background:#333"></div>
<div class="abs" style="left:920.2px;top:80.5px;width:6px;height:1.2px;background:#333"></div>
<svg class="abs" style="left:919px;top:90.5px" width="8" height="7" viewBox="0 0 8 7"><path d="M1 1.5L4 3.5" stroke="#333" stroke-width="1.2"/><path d="M4 3.5L7 5.5" stroke="#aaa" stroke-width="1.2"/></svg>
<!-- watermark -->
<svg class="abs" style="left:830px;top:452px" width="100" height="40" viewBox="830 452 100 40">
<path fill="#555" fill-rule="evenodd" d="M835.4,453.8 H873.3 Q876.3,453.8 876.3,456.8 V486 Q876.3,489 873.3,489 H835.4 Q832.4,489 832.4,486 V456.8 Q832.4,453.8 835.4,453.8 Z M837,458.4 V478.5 Q842,475.5 847,476.5 Q853,478.5 857,475 Q860,469 863.5,469.5 Q867,470 871.7,476.5 V458.4 Z"/>
<text x="838.7" y="474" style="font-family:'Liberation Sans',sans-serif;font-weight:700;font-size:18.3px" fill="#555" stroke="#555" stroke-width="0.7" textLength="16.6" lengthAdjust="spacingAndGlyphs">AI</text>
<text x="879.5" y="477.6" font-family="Liberation Sans, sans-serif" font-weight="600" font-size="15.2" fill="#555">树叶云</text>
</svg>
</div></body></html>
